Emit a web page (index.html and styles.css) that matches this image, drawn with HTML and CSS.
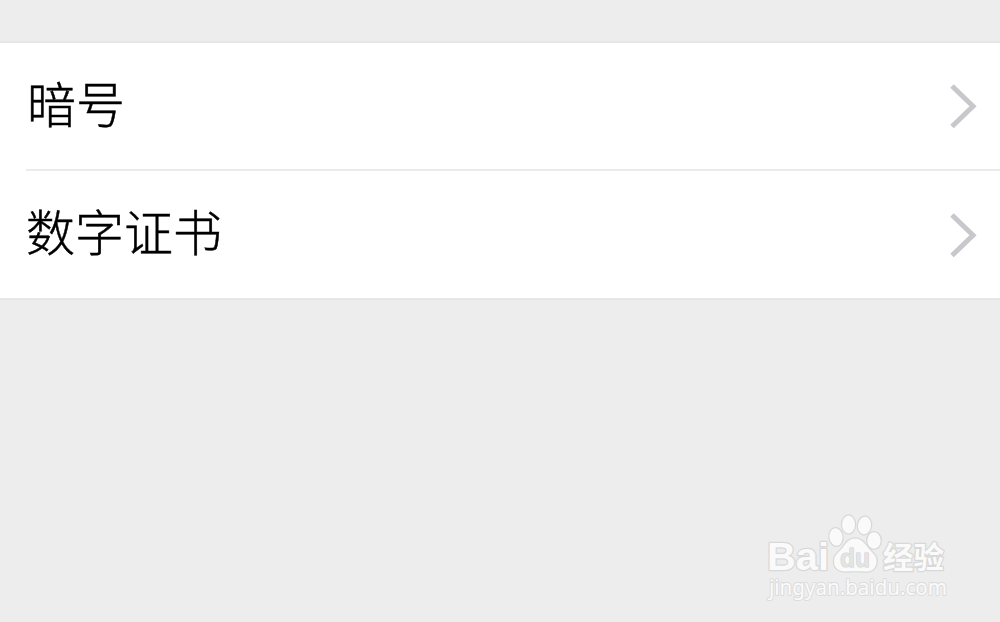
FILE: index.html
```html
<!DOCTYPE html>
<html lang="zh-CN">
<head>
<meta charset="utf-8">
<title>暗号</title>
<link rel="stylesheet" href="styles.css">
</head>
<body>
<main class="page">
  <ul class="list">
    <li class="row"><span class="label">暗号</span>
      <svg class="chevron" viewBox="0 0 30 46"><path d="M3 3 L24 23.3 L3 43.5"/></svg></li>
    <li class="row"><span class="label">数字证书</span>
      <svg class="chevron" viewBox="0 0 30 46"><path d="M3 3 L24 23.3 L3 43.5"/></svg></li>
  </ul>
  <svg class="watermark" viewBox="0 0 205 105">
    <g class="mark">
      <text class="latin" x="12" y="64.5" textLength="62" lengthAdjust="spacingAndGlyphs">Bai</text>
      <ellipse cx="81" cy="32" rx="6.5" ry="8.8" transform="rotate(-8 81 32)"/>
      <ellipse cx="93.5" cy="19.5" rx="6.5" ry="9"/>
      <ellipse cx="109.5" cy="20.5" rx="6.5" ry="8.8" transform="rotate(8 109.5 20.5)"/>
      <ellipse cx="119" cy="35.5" rx="6.7" ry="8.3"/>
      <path d="M100 33.5 C107 33.5 110 39 114 44 C118 48.500 122 51 121.500 57 C121 64 116 67 110 66.500 C104 66 97 66 91 66.500 C84 67 79 63 79 56.500 C79 50 83 48 87 43.500 C91 38 94 33.500 100 33.500Z"/>
      <text class="du" x="85" y="61.5" textLength="30" lengthAdjust="spacingAndGlyphs">du</text>
      <text class="chinese" x="128" y="62.5" textLength="61" lengthAdjust="spacingAndGlyphs">经验</text>
      <text class="site" x="14" y="89.500" textLength="178" lengthAdjust="spacingAndGlyphs">jingyan.baidu.com</text>
    </g>
  </svg>
</main>
</body>
</html>
```
FILE: styles.css
```css
body {
  margin: 0;
  background: #ededed;
}

.page {
  height: 622px;
  box-sizing: border-box;
  padding-top: 41px;
  position: relative;
  overflow: hidden;
}

.list {
  margin: 0;
  padding: 0 0 0 26px;
  list-style: none;
  background: #fff;
  border-top: 2px solid #e6e6e6;
  border-bottom: 2px solid #e6e6e6;
}

.row {
  box-sizing: border-box;
  height: 126px;
  padding-right: 21px;
  display: flex;
  align-items: center;
  justify-content: space-between;
}

.row + .row {
  height: 129px;
  border-top: 2px solid #ebebeb;
}

.label {
  padding: 0 0 9px 1px;
  font: 300 49px/72px "Noto Sans CJK SC", sans-serif;
  color: #000;
  -webkit-text-stroke: 0.5px #000;
}

.row + .row .label {
  padding: 0 0 10px;
}

.chevron {
  width: 30px;
  height: 46px;
  fill: none;
  stroke: #c8c8cc;
  stroke-width: 5;
}

.watermark {
  position: absolute;
  left: 755px;
  top: 505px;
  width: 205px;
  height: 105px;
}

.mark {
  fill: #fafafa;
  stroke: #d8d8d8;
  stroke-width: 2.5;
  stroke-linejoin: round;
  paint-order: stroke;
}

.latin {
  font: bold 39px "Liberation Sans", sans-serif;
}

.du {
  font: bold 25px "Liberation Sans", sans-serif;
  fill: #e4e4e4;
  stroke: #d0d0d0;
  stroke-width: 1;
}

.chinese {
  font: bold 30px "Noto Sans CJK SC", sans-serif;
}

.site {
  font: 21px "Noto Sans", sans-serif;
  stroke: #dcdcdc;
  stroke-width: 2;
}
```
